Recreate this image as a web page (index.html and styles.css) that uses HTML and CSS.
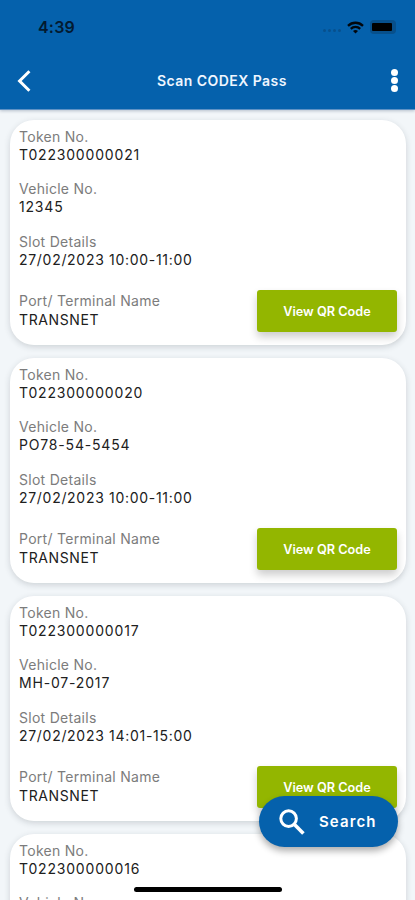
FILE: index.html
```html
<!DOCTYPE html>
<html lang="en">
<head>
<meta charset="utf-8">
<meta name="viewport" content="width=device-width, initial-scale=1">
<title>Scan CODEX Pass</title>
<link rel="stylesheet" href="styles.css">
</head>
<body>
<div class="app">
  <header class="header">
    <div class="status">
      <span class="time">4:39</span>
      <div class="indicators">
        <span class="signal"><i></i><i></i><i></i><i></i></span>
        <svg class="wifi" width="17" height="13" viewBox="0 0 17 13" fill="none" stroke="#02070c" stroke-width="2.3"><path d="M1 4.8a10.8 10.8 0 0 1 15 0M3.8 7.8a6.8 6.8 0 0 1 9.4 0"/><path d="M8.5 12.6 6 10.1a3.7 3.7 0 0 1 5 0z" fill="#02070c" stroke="none"/></svg>
        <span class="battery"><i></i></span>
      </div>
    </div>
    <div class="bar">
      <svg class="back" width="14" height="22" viewBox="0 0 14 22" fill="none" stroke="#fff" stroke-width="3"><path d="M12.4 1.3 2.6 11l9.8 9.7"/></svg>
      <h1>Scan CODEX Pass</h1>
      <div class="more"><i></i><i></i><i></i></div>
    </div>
  </header>
  <main class="list">
    <article class="card">
      <dl><dt>Token No.</dt><dd>T022300000021</dd></dl>
      <dl><dt>Vehicle No.</dt><dd>12345</dd></dl>
      <dl><dt>Slot Details</dt><dd class="slot">27/02/2023 10:00-11:00</dd></dl>
      <div class="foot"><dl><dt>Port/ Terminal Name</dt><dd class="port">TRANSNET</dd></dl><button class="qr">View QR Code</button></div>
    </article>
    <article class="card">
      <dl><dt>Token No.</dt><dd>T022300000020</dd></dl>
      <dl><dt>Vehicle No.</dt><dd>PO78-54-5454</dd></dl>
      <dl><dt>Slot Details</dt><dd class="slot">27/02/2023 10:00-11:00</dd></dl>
      <div class="foot"><dl><dt>Port/ Terminal Name</dt><dd class="port">TRANSNET</dd></dl><button class="qr">View QR Code</button></div>
    </article>
    <article class="card">
      <dl><dt>Token No.</dt><dd>T022300000017</dd></dl>
      <dl><dt>Vehicle No.</dt><dd>MH-07-2017</dd></dl>
      <dl><dt>Slot Details</dt><dd class="slot">27/02/2023 14:01-15:00</dd></dl>
      <div class="foot"><dl><dt>Port/ Terminal Name</dt><dd class="port">TRANSNET</dd></dl><button class="qr">View QR Code</button></div>
    </article>
    <article class="card">
      <dl><dt>Token No.</dt><dd>T022300000016</dd></dl>
      <dl><dt>Vehicle No.</dt></dl>
    </article>
  </main>
  <button class="search">
    <svg width="26" height="26" viewBox="0 0 26 26" fill="none" stroke="#fff" stroke-width="3"><circle cx="9.6" cy="9.6" r="7.8"/><path d="m15 15 9.4 9.4" stroke-width="3.6"/></svg>
    <span>Search</span>
  </button>
  <div class="home"></div>
</div>
</body>
</html>
```
FILE: styles.css
```css
* { box-sizing: border-box; }
body { margin: 0; font-family: Inter, "Liberation Sans", sans-serif; }
button { border: 0; font: inherit; color: #fff; }
.app { position: relative; display: flex; flex-direction: column; height: 900px; overflow: hidden; background: #f2f6f9; }
.header { flex: none; height: 110px; background: #0561ac; border-bottom: 1px solid #5f92c5; box-shadow: 0 1px 3px rgba(0,30,70,.25); z-index: 1; }
.status { display: flex; justify-content: space-between; align-items: center; height: 54px; padding: 0 19px 0 38px; }
.time { font-size: 16px; font-weight: 600; letter-spacing: .2px; color: #031a30; }
.indicators { display: flex; align-items: center; }
.signal { display: flex; gap: 2px; margin: 7px 6px 0 0; }
.signal i { width: 3px; height: 3px; border-radius: 50%; background: #07508d; }
.wifi { margin-right: 6px; }
.battery { display: flex; width: 26px; height: 14px; padding: 3px 4px 3px 2px; border-radius: 4px; background: #07508c; }
.battery i { flex: 1; border-radius: 1px; background: #000; }
.bar { display: flex; align-items: center; height: 53px; padding: 0 16px 0 17px; }
.bar h1 { margin: 0 auto 0 126px; font-size: 14px; font-weight: 600; letter-spacing: .45px; color: #eff6ff; }
.more { display: flex; flex-direction: column; width: 8px; gap: 1px; }
.more i { width: 7px; height: 7px; border-radius: 50%; background: #fff; }
.list { flex: 1; min-height: 0; display: flex; flex-direction: column; gap: 13px; padding: 10px 9px 0 10px; overflow: hidden; }
.card { flex: none; height: 225px; padding: 8px 9px; border-radius: 24px; background: #fff; box-shadow: 0 2px 6px rgba(40,50,60,.18); }
dl { margin: 0 0 16px; font-size: 14px; line-height: 18.15px; white-space: nowrap; }
dt { color: #7c7c7c; letter-spacing: .28px; }
dd { margin: 0; color: #202020; letter-spacing: .82px; }
.slot { letter-spacing: .7px; }
.port { letter-spacing: .6px; }
.foot { display: flex; justify-content: space-between; align-items: flex-start; margin-top: 23.5px; }
.qr { width: 140px; height: 42px; margin-top: -2px; padding: 0; border-radius: 3px; background: #93b600; font-size: 12.7px; font-weight: 600; box-shadow: 0 5px 9px rgba(0,0,0,.2); }
.search { position: absolute; left: 259px; top: 796px; z-index: 2; display: flex; align-items: center; width: 139px; height: 51px; padding: 0 0 0 20px; gap: 14px; border-radius: 26px; background: #0561ac; font-size: 15px; font-weight: 600; letter-spacing: 1.1px; box-shadow: 0 4px 7px rgba(0,0,0,.32); }
.home { position: absolute; left: 134px; top: 887px; z-index: 3; width: 148px; height: 5px; border-radius: 3px; background: #000; }
```
